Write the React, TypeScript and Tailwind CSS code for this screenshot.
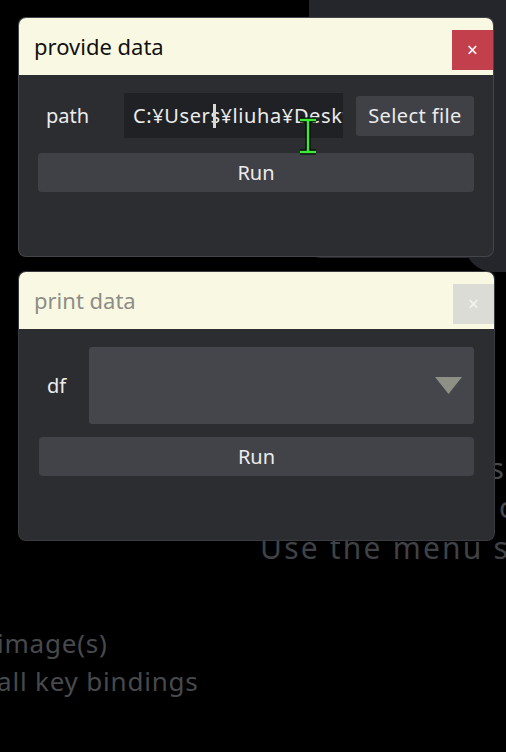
const font = { fontFamily: '"Noto Sans", "Noto Sans CJK JP", sans-serif' };

function Header({ title, active }: { title: string; active: boolean }) {
  return (
    <div className="flex h-[57px] items-start justify-between rounded-t-[7px] bg-[#f9f9e3] pl-[15px]">
      <span
        className={`mt-[14px] text-[22px] leading-[28px] ${active ? "text-[#111]" : "text-[#8d8d86]"}`}
      >
        {title}
      </span>
      <div
        className={`mt-[12px] flex h-[40px] w-[41px] items-center justify-center text-[19px] ${
          active ? "bg-[#c2404b] text-white" : "bg-[#dcdcd6] text-[#f4f4f0]"
        }`}
      >
        ×
      </div>
    </div>
  );
}

function IBeam() {
  return (
    <svg
      className="absolute left-[297px] top-[117px]"
      width="24"
      height="38"
      viewBox="0 0 24 38"
    >
      <path d="M3 3h16M11 3v32M3 35h16" stroke="#000" strokeWidth="5" fill="none" />
      <path d="M3 3h16M11 3v32M3 35h16" stroke="#3ee83a" strokeWidth="2.5" fill="none" />
    </svg>
  );
}

export default function App() {
  return (
    <div
      className="relative h-[752px] w-[506px] overflow-hidden bg-black"
      style={font}
    >
      {/* window behind */}
      <div className="absolute left-[309px] top-[-20px] h-[278px] w-[230px] rounded-[12px] bg-[#25262b]" />
      <div className="absolute left-[465px] top-[240px] h-[32px] w-[70px] rounded-bl-[28px] bg-[#25262b]" />

      {/* text behind */}
      <div className="absolute left-[490px] top-[446px] text-[29px] text-[#474a4c]">s</div>
      <div className="absolute left-[499px] top-[485px] text-[29px] text-[#474a4c]">c</div>
      <div className="absolute left-[260px] top-[525px] whitespace-nowrap text-[30px] tracking-[2.2px] text-[#3f4246]">
        Use the menu s
      </div>
      <div className="absolute left-[-3px] top-[624px] text-[26px] leading-[38px] tracking-[0.8px] text-[#474a4c]">
        <div>image(s)</div>
        <div>all key bindings</div>
      </div>

      <div className="relative flex flex-col gap-[16px] pl-[19px] pt-[18px]">
        {/* provide data */}
        <div className="flex h-[238px] w-[474px] flex-col rounded-[7px] bg-[#2c2d31] shadow-[0_0_0_1px_#45464b]">
          <Header title="provide data" active />
          <div className="flex flex-col gap-[15px] px-[19px] pt-[18px]">
            <div className="flex items-center">
              <span className="w-[86px] pl-[8px] text-[20px] text-[#ececec]">path</span>
              <div className="relative flex h-[45px] w-[219px] items-center overflow-hidden bg-[#202125] pl-[9px]">
                <span className="whitespace-nowrap text-[20px] tracking-[0.6px] text-[#ececec]">
                  C:¥Users¥liuha¥Desktop
                </span>
                <div className="absolute left-[89px] top-[11px] h-[24px] w-[3px] bg-[#d8d8d0]" />
              </div>
              <div className="ml-[13px] flex h-[40px] w-[118px] items-center justify-center rounded-[3px] bg-[#3f4146] text-[20px] tracking-[0.4px] text-[#ececec]">
                Select file
              </div>
            </div>
            <div className="flex h-[39px] items-center justify-center rounded-[4px] bg-[#3f4146] text-[20px] text-[#ececec]">
              Run
            </div>
          </div>
        </div>

        {/* print data */}
        <div className="flex h-[268px] w-[475px] flex-col rounded-[7px] bg-[#2c2d31] shadow-[0_0_0_1px_#3a3b40]">
          <Header title="print data" active={false} />
          <div className="flex flex-col gap-[13px] px-[20px] pt-[18px]">
            <div className="flex items-center">
              <span className="w-[50px] pl-[8px] text-[20px] text-[#ececec]">df</span>
              <div className="flex h-[77px] flex-1 items-center justify-end rounded-[3px] bg-[#44464c] pr-[12px]">
                <svg width="27" height="17" viewBox="0 0 27 17">
                  <path d="M0 0h27L13.5 17z" fill="#8e9086" />
                </svg>
              </div>
            </div>
            <div className="flex h-[39px] items-center justify-center rounded-[4px] bg-[#414349] text-[20px] text-[#ececec]">
              Run
            </div>
          </div>
        </div>
      </div>

      <IBeam />
    </div>
  );
}
